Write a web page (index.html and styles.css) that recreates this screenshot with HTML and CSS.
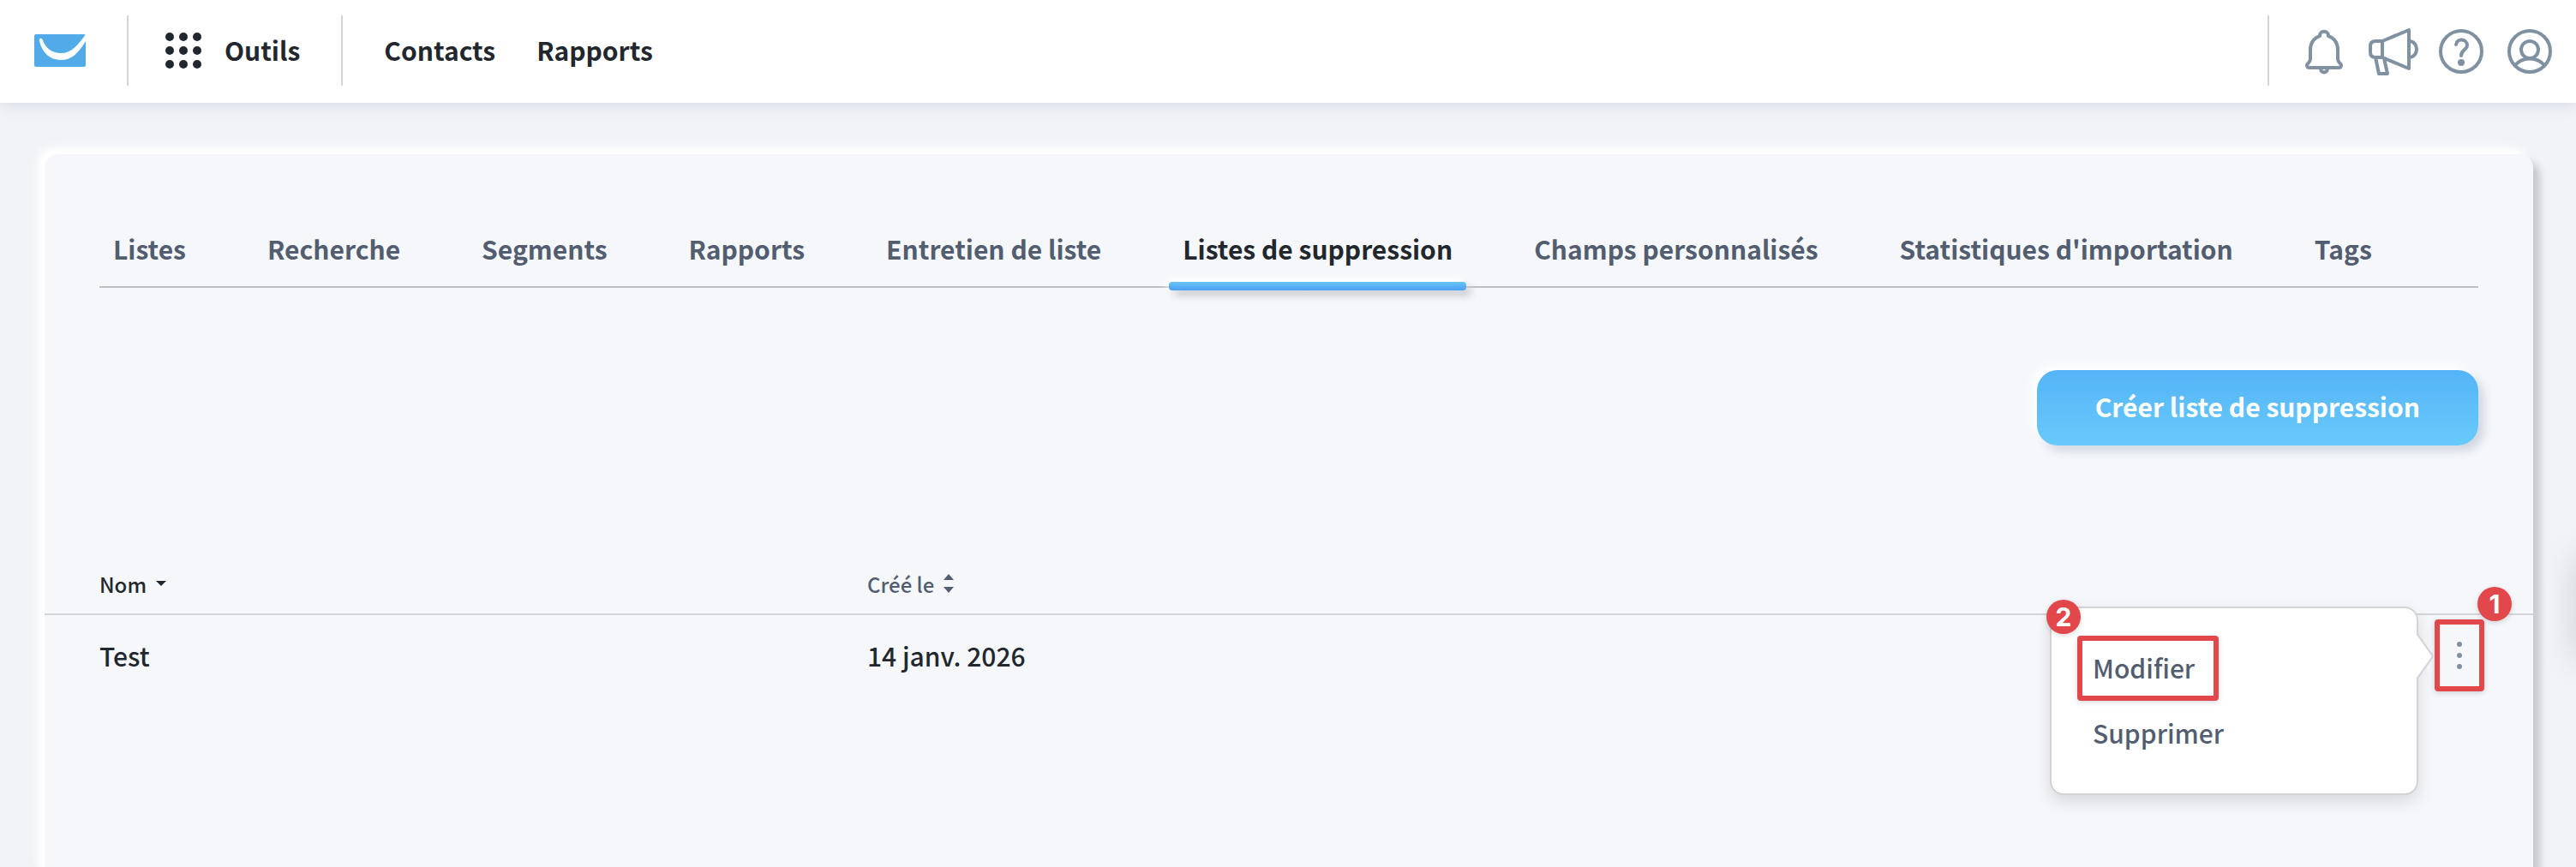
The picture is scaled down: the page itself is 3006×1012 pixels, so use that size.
FILE: index.html
```html
<!DOCTYPE html>
<html lang="fr">
<head>
    <meta charset="UTF-8">
    <meta name="viewport" content="width=device-width, initial-scale=1.0">
    <title>Listes de suppression</title>
    <link rel="stylesheet" href="styles.css">
</head>
<body>
    <!-- Top bar -->
    <header class="topbar">
        <a class="logo" href="#" aria-label="Accueil">
            <svg width="60" height="38" viewBox="0 0 60 38">
                <rect width="60" height="38" rx="2" fill="#50abe8"/>
                <path d="M6 8C5 4 9 4 10 7C13 16 21 22 31 22C43 22 50 14 60 0V8C51 23 43 30 31 30C18 30 9 21 6 8Z" fill="#fff"/>
            </svg>
        </a>
        <button class="tools" type="button">
            <svg width="44" height="44" viewBox="0 0 44 44" fill="#22272e">
                <circle cx="6" cy="6" r="5"/><circle cx="22" cy="6" r="5"/><circle cx="38" cy="6" r="5"/>
                <circle cx="6" cy="22" r="5"/><circle cx="22" cy="22" r="5"/><circle cx="38" cy="22" r="5"/>
                <circle cx="6" cy="38" r="5"/><circle cx="22" cy="38" r="5"/><circle cx="38" cy="38" r="5"/>
            </svg>
            <span>Outils</span>
        </button>
        <nav class="main-nav">
            <a href="#">Contacts</a>
            <a href="#">Rapports</a>
        </nav>
        <div class="actions">
            <button type="button" aria-label="Notifications">
                <svg width="60" height="60" viewBox="1 0 60 60">
                    <path d="M26 12C26 5 36 5 36 12C44 15 47 21 47 28V39C47 43 51 44 51 46C51 48 50 49 48 49H14C12 49 11 48 11 46C11 44 15 43 15 39V28C15 21 18 15 26 12ZM27 50C27 56 35 56 35 50"/>
                </svg>
            </button>
            <button type="button" aria-label="Annonces">
                <svg width="60" height="60" viewBox="0 0 60 60">
                    <path d="M18 18H10Q4 18 4 24V31Q4 37 10 37H18ZM18 18L49 5V50L18 37M49 18C61 18 61 37 49 37M10 37L14 56H24L20 38"/>
                </svg>
            </button>
            <button type="button" aria-label="Aide">
                <svg width="60" height="60" viewBox="0 0 60 60">
                    <circle cx="30" cy="30" r="24"/>
                    <path d="M24 22C25 14 37 15 37 23C37 28 30 28 30 35"/>
                    <circle class="dot" cx="30" cy="43" r="4"/>
                </svg>
            </button>
            <button type="button" aria-label="Compte">
                <svg width="60" height="60" viewBox="0 0 60 60">
                    <circle cx="30" cy="30" r="24"/>
                    <circle cx="30" cy="28" r="10"/>
                    <path d="M13 46C22 36 38 36 47 46"/>
                </svg>
            </button>
        </div>
    </header>

    <main class="panel">
        <!-- Tabs -->
        <nav class="tabs">
            <a href="#">Listes</a>
            <a href="#">Recherche</a>
            <a href="#">Segments</a>
            <a href="#">Rapports</a>
            <a href="#">Entretien de liste</a>
            <a class="active" href="#" aria-current="page">Listes de suppression</a>
            <a href="#">Champs personnalisés</a>
            <a href="#">Statistiques d'importation</a>
            <a href="#">Tags</a>
        </nav>

        <div class="toolbar">
            <button class="create-button" type="button">Créer liste de suppression</button>
        </div>

        <!-- Suppression lists -->
        <table class="lists">
            <thead>
                <tr>
                    <th class="name sorted"><button type="button">Nom
                        <svg width="12" height="8" viewBox="0 0 12 8"><path d="M0 1H12L6 7Z"/></svg></button></th>
                    <th class="created"><button type="button">Créé le
                        <svg width="12" height="22" viewBox="0 0 12 22"><path d="M0 7L6 0L12 7ZM0 15H12L6 22Z"/></svg></button></th>
                    <th class="options" aria-label="Options"></th>
                </tr>
            </thead>
            <tbody>
                <tr>
                    <td class="name">Test</td>
                    <td class="created">14 janv. 2026</td>
                    <td class="options">
                        <div class="options-wrap">
                            <button class="dots marked" type="button" aria-label="Options de la liste">
                                <svg width="8" height="34" viewBox="0 0 8 34"><circle cx="4" cy="4" r="3"/><circle cx="4" cy="17" r="3"/><circle cx="4" cy="30" r="3"/></svg>
                            </button>
                            <span class="badge badge-one">1</span>
                            <div class="menu">
                                <svg class="menu-arrow" width="20" height="56" viewBox="0 0 20 56"><path d="M0 1L17 25Q20 28 17 31L0 55"/></svg>
                                <button class="marked" type="button">Modifier</button>
                                <button type="button">Supprimer</button>
                                <span class="badge badge-two">2</span>
                            </div>
                        </div>
                    </td>
                </tr>
            </tbody>
        </table>
    </main>
    <div class="edge-tab"></div>
</body>
</html>
```

FILE: styles.css
```css
* {
    box-sizing: border-box;
}

body {
    margin: 0;
    min-height: 100vh;
    display: flex;
    flex-direction: column;
    overflow: hidden;
    background-color: #f1f3f7;
    color: #22272e;
    font-family: "Noto Sans CJK SC", "Open Sans", sans-serif;
    font-size: 30px;
    font-weight: 500;
}

a {
    color: inherit;
    text-decoration: none;
}

button {
    padding: 0;
    border: none;
    background: none;
    color: inherit;
    font: inherit;
    cursor: pointer;
}

svg {
    display: block;
}

/* Top bar */
.topbar {
    display: flex;
    align-items: center;
    height: 120px;
    padding: 0 24px 2px 40px;
    background-color: #fff;
    box-shadow: 0 4px 16px #d9dde6;
    font-weight: bold;
}

.tools {
    display: flex;
    align-items: center;
    gap: 26px;
    height: 82px;
    margin-left: 48px;
    padding: 0 48px 0 42px;
    border-left: 2px solid #d3d4d6;
    border-right: 2px solid #d3d4d6;
}

.tools span,
.main-nav a {
    padding-bottom: 2px;
}

.main-nav {
    display: flex;
    gap: 48px;
    margin-left: 48px;
}

.actions {
    display: flex;
    align-items: center;
    gap: 20px;
    height: 82px;
    margin-left: auto;
    padding-left: 34px;
    border-left: 2px solid #d3d4d6;
}

.actions svg {
    margin-top: 2px;
    fill: none;
    stroke: #8092a2;
    stroke-width: 4;
    stroke-linecap: round;
    stroke-linejoin: round;
}

.actions .dot {
    fill: #8092a2;
    stroke: none;
}

/* Panel */
.panel {
    flex: 1;
    margin: 60px 50px -20px 52px;
    border-radius: 16px;
    background-color: #f5f7fb;
    box-shadow: -8px -8px 10px #fff, 8px 8px 10px #c6c8cc;
}

/* Tabs */
.tabs {
    display: flex;
    gap: 63px;
    height: 156px;
    margin: 0 64px;
    border-bottom: 2px solid #bebfc1;
    color: #525d70;
    font-weight: bold;
}

.tabs a {
    position: relative;
    padding: 88px 16px 0;
    white-space: nowrap;
}

.tabs .active {
    color: #22272e;
}

.tabs .active::after {
    content: "";
    position: absolute;
    left: 0;
    right: 0;
    bottom: -5px;
    height: 10px;
    border-radius: 4px;
    background: linear-gradient(#67c5f8, #4b9ff0);
    box-shadow: -4px -4px 10px #fff, 6px 6px 10px #c6c8cc;
}

.toolbar {
    display: flex;
    justify-content: flex-end;
    padding: 96px 64px 120px;
}

.create-button {
    height: 88px;
    padding: 0 68px 4px;
    border-radius: 24px;
    background: linear-gradient(#54b4f8, #68cafa);
    box-shadow: -6px -6px 12px #fff, 6px 6px 12px #cdd3de;
    color: #fff;
    font-weight: bold;
}

/* Table */
.lists {
    width: 100%;
    border-collapse: collapse;
    table-layout: fixed;
}

.lists th {
    height: 77px;
    padding: 6px 0 0;
    border-bottom: 2px solid #d2d5da;
    color: #525d70;
    font-size: 24px;
    font-weight: 500;
    text-align: left;
}

.lists th button {
    display: flex;
    align-items: center;
    gap: 11px;
}

.lists th svg {
    fill: currentColor;
}

.lists .sorted {
    color: #22272e;
}

.lists td {
    height: 94px;
    padding: 0;
}

.lists .name {
    width: 960px;
    padding-left: 64px;
}

.options-wrap {
    position: relative;
    display: flex;
    justify-content: flex-end;
    padding-right: 57px;
}

.dots {
    display: grid;
    place-items: center;
    width: 58px;
    height: 84px;
}

.dots svg {
    fill: #8092a2;
}

.marked {
    border: 6px solid #e2484b;
    border-radius: 4px;
    box-shadow: 0 2px 6px rgba(0, 0, 0, 0.15);
}

.badge {
    position: absolute;
    display: grid;
    place-items: center;
    width: 40px;
    height: 40px;
    border-radius: 50%;
    background-color: #e2484b;
    color: #fff;
    font-family: Inter, sans-serif;
    font-weight: bold;
    box-shadow: 0 2px 6px rgba(0, 0, 0, 0.15);
}

.badge-one {
    top: -38px;
    right: 25px;
}

.badge-two {
    top: -10px;
    left: -6px;
}

/* Row menu */
.menu {
    position: absolute;
    top: -15px;
    right: 134px;
    display: flex;
    flex-direction: column;
    align-items: flex-start;
    width: 430px;
    height: 220px;
    padding: 32px 30px;
    border: 2px solid #d2d3d5;
    border-radius: 16px;
    background-color: #fff;
    box-shadow: 0 8px 20px rgba(0, 0, 0, 0.12);
    color: #525d70;
}

.menu button {
    height: 77px;
    padding: 0 18px 2px;
}

.menu button.marked {
    padding: 0 22px 2px 12px;
}

.menu-arrow {
    position: absolute;
    top: 28px;
    left: 100%;
    fill: #fff;
    stroke: #d2d3d5;
    stroke-width: 2;
}

/* Shadow of the drawer tab on the right edge */
.edge-tab {
    position: absolute;
    top: 650px;
    left: 100%;
    width: 40px;
    height: 120px;
    box-shadow: 0 0 40px rgba(0, 0, 0, 0.15);
}
```
